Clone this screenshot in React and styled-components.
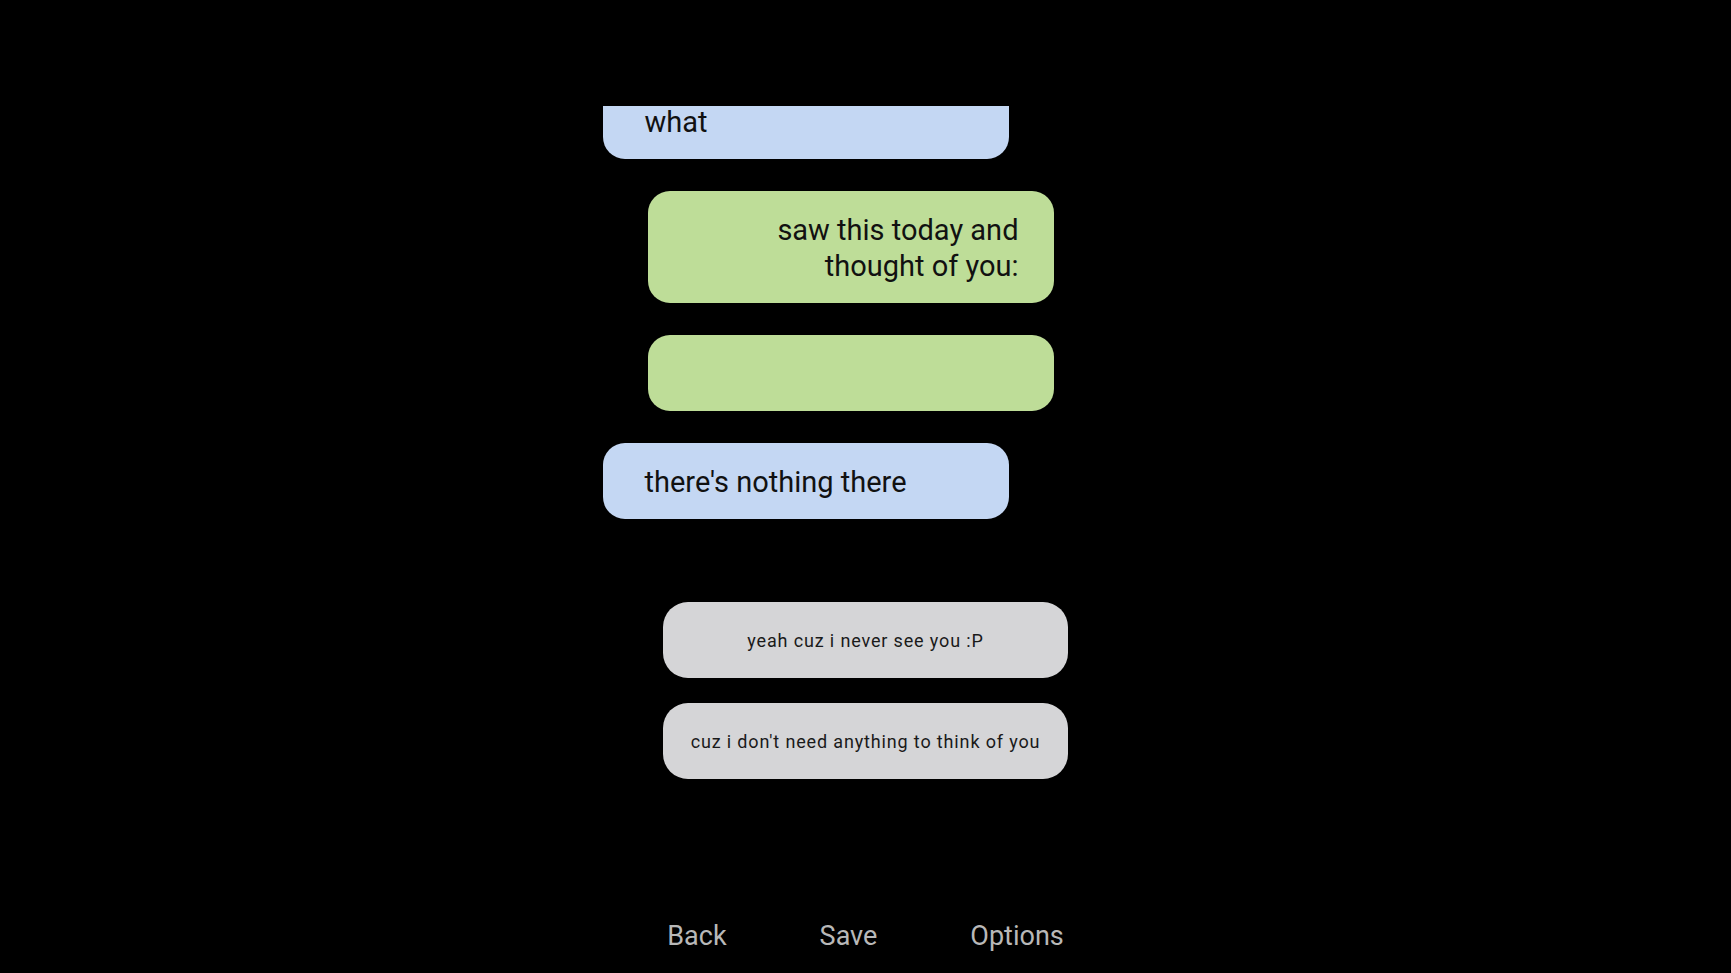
import React from 'react';
import styled, { createGlobalStyle, css } from 'styled-components';

const GlobalStyle = createGlobalStyle`
    html, body {
        margin: 0;
        padding: 0;
        background: #000;
    }
    body {
        font-family: Roboto, 'Noto Sans', sans-serif;
    }
`;

const PAGE = styled.div`
    height: 100vh;
    display: flex;
    flex-direction: column;
    align-items: center;
    background: #000;
    overflow: hidden;
`;

const CHATWINDOW = styled.div`
    margin-top: 106px;
    width: 526px;
    height: 454px;
    overflow: hidden;
    flex-shrink: 0;
`;

const CHATSCROLL = styled.div`
    margin-top: -23px;
    display: flex;
    flex-direction: column;
    gap: 32px;
`;

const BUBBLE = styled.div`
    box-sizing: border-box;
    width: 406px;
    min-height: 76px;
    padding: 21px 35px 19px 42px;
    border-radius: 22px;
    font-size: 29px;
    line-height: 36px;
    color: #111;
    background: #c4d7f3;
    text-align: left;

    ${props => props.mine && css`
        margin-left: 45px;
        padding-left: 110px;
        background: #bedd98;
        text-align: right;
    `}
`;

const REPLIES = styled.div`
    margin-top: 42px;
    display: flex;
    flex-direction: column;
    gap: 25px;
`;

const REPLY = styled.button`
    box-sizing: border-box;
    width: 405px;
    height: 76px;
    border: none;
    border-radius: 25px;
    background: #d5d5d7;
    color: #1a1a1a;
    font-family: Roboto, 'Noto Sans', sans-serif;
    font-size: 18px;
    letter-spacing: 0.85px;
    text-align: center;
    cursor: pointer;
`;

const BOTTOMBAR = styled.div`
    margin-top: auto;
    padding-bottom: 19px;
    display: flex;
    justify-content: center;
    gap: 93px;
`;

const NAVBUTTON = styled.button`
    border: none;
    background: none;
    padding: 0;
    color: #b8b8b8;
    font-family: Roboto, 'Noto Sans', sans-serif;
    font-size: 27px;
    line-height: 36px;
    cursor: pointer;
`;

const messages = [
    { id: 1, mine: false, text: 'what' },
    { id: 2, mine: true, text: 'saw this today and thought of you:' },
    { id: 3, mine: true, text: '' },
    { id: 4, mine: false, text: "there's nothing there" },
];

const replies = [
    'yeah cuz i never see you :P',
    "cuz i don't need anything to think of you",
];

const App = () => {
    return (
        <PAGE>
            <GlobalStyle />
            <CHATWINDOW>
                <CHATSCROLL>
                    {messages.map(m => (
                        <BUBBLE key={m.id} mine={m.mine}>{m.text}</BUBBLE>
                    ))}
                </CHATSCROLL>
            </CHATWINDOW>
            <REPLIES>
                {replies.map(r => (
                    <REPLY key={r}>{r}</REPLY>
                ))}
            </REPLIES>
            <BOTTOMBAR>
                <NAVBUTTON>Back</NAVBUTTON>
                <NAVBUTTON>Save</NAVBUTTON>
                <NAVBUTTON>Options</NAVBUTTON>
            </BOTTOMBAR>
        </PAGE>
    );
};

export default App;
